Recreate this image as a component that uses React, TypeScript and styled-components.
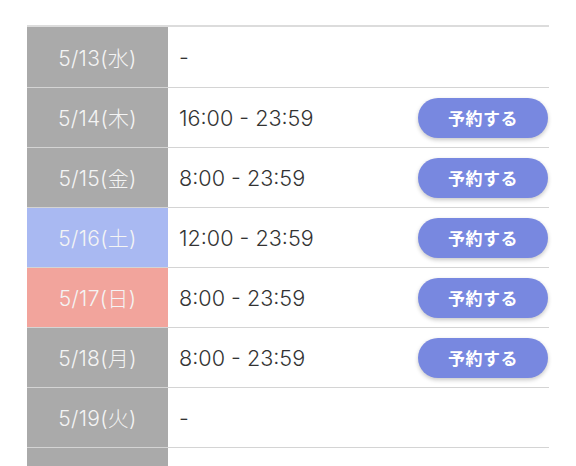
import React from "react";
import styled, { createGlobalStyle } from "styled-components";

const Global = createGlobalStyle`
  body {
    margin: 0;
    background: #ffffff;
    font-family: Inter, "Noto Sans CJK JP", sans-serif;
  }
`;

const Table = styled.div`
  margin: 25px 0 0 27px;
  width: 522px;
  border-top: 2px solid #dcdcdc;
  display: flex;
  flex-direction: column;
`;

const Row = styled.div<{ $first?: boolean }>`
  display: grid;
  grid-template-columns: 141px 1fr;
  height: ${(p) => (p.$first ? 60 : 59)}px;
  border-bottom: 1px solid #d4d4d4;
`;

type Kind = "weekday" | "sat" | "sun";

const DateCell = styled.div<{ $kind: Kind }>`
  display: flex;
  align-items: center;
  justify-content: center;
  background: ${(p) =>
    p.$kind === "sat" ? "#a9b9f2" : p.$kind === "sun" ? "#f2a49c" : "#aaaaaa"};
  color: #f4f4f4;
  font-family: Inter, "Noto Sans CJK JP", sans-serif;
  font-size: 21px;
  font-weight: 300;
  letter-spacing: 0.3px;
  padding-bottom: 1px;
  box-sizing: border-box;
`;

const InfoCell = styled.div`
  display: flex;
  align-items: center;
  justify-content: space-between;
  padding-left: 11px;
  padding-right: 1px;
`;

const Time = styled.span`
  color: #333333;
  font-family: Inter, "Noto Sans CJK JP", sans-serif;
  font-size: 21.6px;
  font-weight: 300;
`;

const Reserve = styled.button`
  width: 130px;
  height: 40px;
  border: none;
  border-radius: 20px;
  background: #7888e0;
  color: #ffffff;
  font-family: "Noto Sans CJK JP", "Noto Sans", sans-serif;
  font-size: 17px;
  font-weight: 700;
  letter-spacing: 0.5px;
  box-shadow: 0 2px 4px rgba(0, 0, 0, 0.22);
  cursor: pointer;
  padding: 0;
`;

const rows: { date: string; kind: Kind; time: string | null }[] = [
  { date: "5/13(水)", kind: "weekday", time: null },
  { date: "5/14(木)", kind: "weekday", time: "16:00 - 23:59" },
  { date: "5/15(金)", kind: "weekday", time: "8:00 - 23:59" },
  { date: "5/16(土)", kind: "sat", time: "12:00 - 23:59" },
  { date: "5/17(日)", kind: "sun", time: "8:00 - 23:59" },
  { date: "5/18(月)", kind: "weekday", time: "8:00 - 23:59" },
  { date: "5/19(火)", kind: "weekday", time: null },
  { date: "", kind: "weekday", time: "" },
];

export default function App() {
  return (
    <>
      <Global />
      <Table>
        {rows.map((r, i) => (
          <Row key={i} $first={i === 0}>
            <DateCell $kind={r.kind}>{r.date}</DateCell>
            <InfoCell>
              <Time>{r.time === null ? "-" : r.time}</Time>
              {r.time && <Reserve>予約する</Reserve>}
            </InfoCell>
          </Row>
        ))}
      </Table>
    </>
  );
}
